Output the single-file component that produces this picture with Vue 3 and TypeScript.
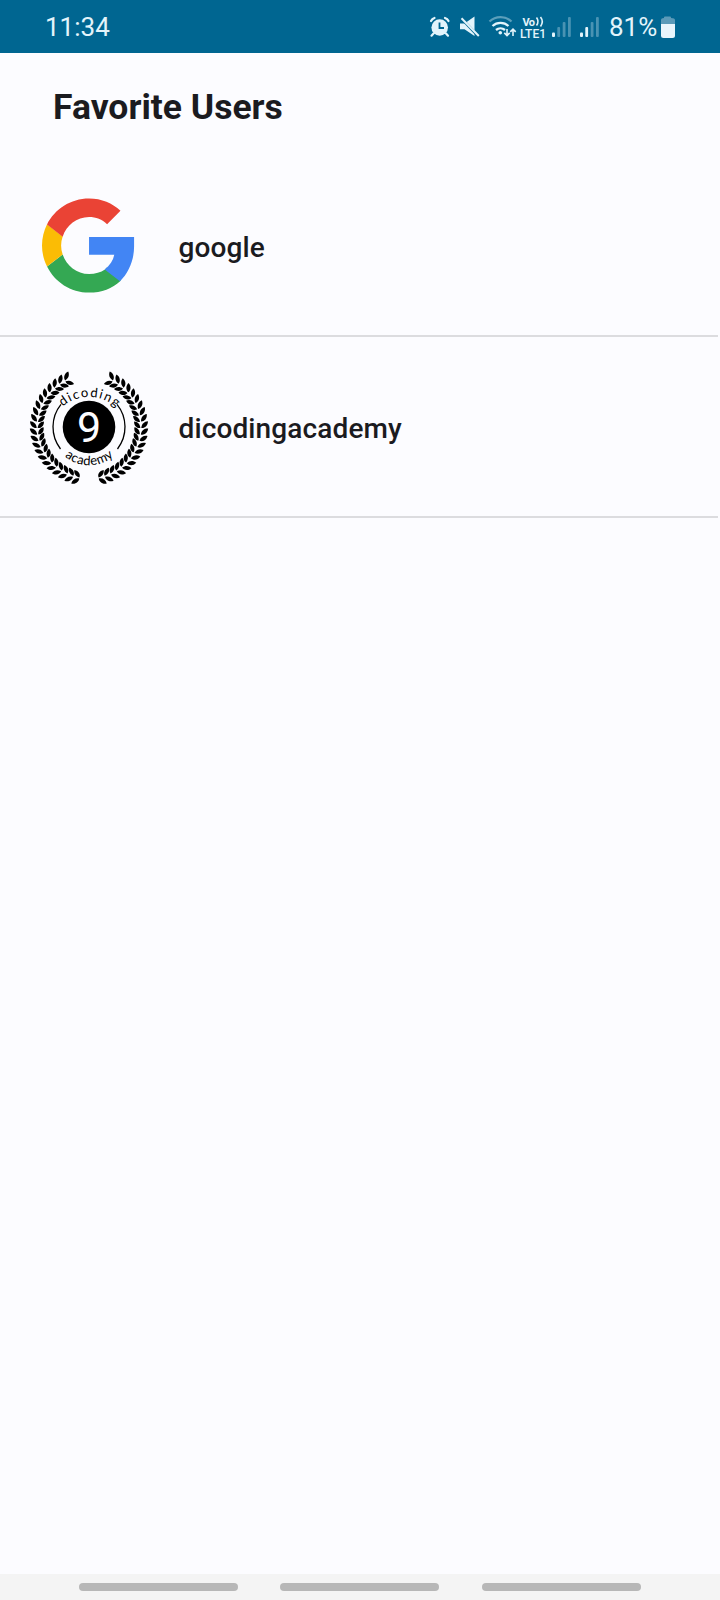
<script setup lang="ts">
interface Leaf {
  transform: string
}

const users = ['google', 'dicodingacademy']

const signals = [
  { id: 1, strength: 1 },
  { id: 2, strength: 2 },
]

function buildLaurel(): Leaf[] {
  const leaves: Leaf[] = []
  const count = 21
  for (let i = 0; i < count; i++) {
    const angle = 103 + (i * (245 - 103)) / (count - 1)
    leaves.push({ transform: `rotate(${angle}) translate(51.8 0)` })
  }
  return leaves
}

const laurel = buildLaurel()
</script>

<template>
  <div class="screen">
    <header class="status">
      <span class="time">11:34</span>
      <svg class="indicators" width="180" height="53" viewBox="424 0 180 53">
        <g fill="#e3f4fb">
          <circle cx="439.700" cy="27.500" r="8.300" />
          <path d="M431 21a6 6 0 0 1 3.500-3M448.500 21a6 6 0 0 0-3.500-3M433.500 33.500l-2 2.200M446 33.500l2 2.200" fill="none" stroke="#e3f4fb" stroke-width="2.200" stroke-linecap="round" />
          <path d="M439.500 22.500v5.500h4.500" fill="none" stroke="#006691" stroke-width="1.800" />
          <path d="M460 23.500h4.500l10-7v19.500l-10-6.800H460z" />
          <path d="M459.500 16.500l19.500 20.500" stroke="#006691" stroke-width="2.600" />
          <path d="M461.500 18.300l17.300 17.700" stroke="#e3f4fb" stroke-width="2" />
        </g>
        <g fill="none" stroke="#e3f4fb" stroke-width="2.300">
          <path d="M489.500 21.500a16 16 0 0 1 22 0" opacity=".4" />
          <path d="M492.500 26a12 12 0 0 1 16 0" />
          <path d="M496 30a7 7 0 0 1 9 0" />
        </g>
        <circle cx="500.300" cy="32.800" r="1.800" fill="#e3f4fb" />
        <path d="M507 29v6.500m-2.700-2.600l2.700 2.700 2.700-2.700M513 36v-6.700m-2.700 2.600l2.700-2.700 2.700 2.700" fill="none" stroke="#e3f4fb" stroke-width="1.600" />
        <text x="522.500" y="25.500" class="net" textLength="12.500">Vo</text>
        <path d="M536.500 17.500q3 4 0 8M540.500 17q3.500 4.500 0 9.500" fill="none" stroke="#e3f4fb" stroke-width="1.600" />
        <text x="520" y="37.500" class="net lte" textLength="26">LTE1</text>
        <g v-for="s in signals" :key="s.id" fill="#e3f4fb" :transform="`translate(${552 + (s.id - 1) * 28} 0)`">
          <rect x="0" y="32.500" width="3" height="4.500" rx="1" />
          <rect x="5.300" y="27" width="2.800" height="10" rx="1" :opacity="s.strength > 1 ? 1 : 0.32" />
          <rect x="10.700" y="22" width="2.800" height="15" rx="1" opacity=".32" />
          <rect x="16" y="17" width="2.800" height="20" rx="1" opacity=".32" />
        </g>
      </svg>
      <span class="percent">81%</span>
      <svg class="battery" width="16" height="24" viewBox="0 0 16 24">
        <path d="M1 9V5q0-2 3-2v-.5q0-1 1-1h5q1 0 1 1V3q4 0 4 2v4z" fill="#5b9ab8" />
        <path d="M1 9h14v11.500q0 2.500-2.500 2.500h-9Q1 23 1 20.500z" fill="#e9f5fb" />
      </svg>
    </header>

    <main class="content">
      <h1>Favorite Users</h1>
      <ul>
        <li v-for="user in users" :key="user">
          <svg v-if="user === 'google'" class="avatar" viewBox="0 0 120 120">
            <g transform="translate(13 12.500) scale(3.920)">
              <path fill="#34a853" d="M5.270 14.270L1.290 17.330C3.260 21.300 7.310 24 12 24c3.240 0 5.950-1.080 7.930-2.910l.3-.5-3.700-3-.47.500c-1.080.72-2.450 1.160-4.060 1.160-3.130 0-5.780-2.110-6.730-4.980z" />
              <path fill="#4285f4" d="M12 9.820v4.550h6.440c-.3 1.530-1.130 2.680-2.440 3.750l3.880 3C22.100 19 23.490 15.700 23.490 12.270V9.820z" />
              <path fill="#fbbc05" d="M1.290 6.550C.48 8.260 0 10.070 0 12s.48 3.740 1.290 5.370l3.980-3.070A7 7 0 0 1 5.270 9.720z" />
              <path fill="#ea4335" d="M12 4.750c1.770 0 3.350.61 4.600 1.800l3.420-3.420C17.950 1.190 15.240 0 12 0 7.310 0 3.260 2.700 1.280 6.610l3.990 3.150C6.220 6.860 8.870 4.750 12 4.750z" />
            </g>
          </svg>
          <svg v-else class="avatar" viewBox="0 0 120 120">
            <defs>
              <path id="arc-top" d="M26 48.100A41 41 0 0 1 94 48.100" />
              <path id="arc-bottom" d="M33.500 87.500A38 38 0 0 0 86.500 87.500" />
              <g id="sprig">
                <path d="M.5-2C3.500-2.600 7.300 0 7.200 4.600C3.500 4.400 .8 2.200 .5-2z" />
                <path d="M-.5-2C-3.500-2.600-7 0-6.600 4.600C-3.300 4.400-.8 2.200-.5-2z" />
              </g>
            </defs>
            <g v-for="side in [1, -1]" :key="side" :transform="`translate(60 60) scale(${side} 1)`">
              <use v-for="(leaf, i) in laurel" :key="i" href="#sprig" :transform="leaf.transform" />
              <path d="M-28-22.600A36 36 0 0 0-28.500 22" fill="none" stroke="#000" stroke-width="1.300" />
            </g>
            <circle cx="60" cy="60" r="26.300" />
            <text x="60" y="75" class="nine">9</text>
            <text class="motto"><textPath href="#arc-top" startOffset="11.500" textLength="58">dicoding</textPath></text>
            <text class="motto"><textPath href="#arc-bottom" startOffset="3" textLength="53">academy</textPath></text>
          </svg>
          <span class="name">{{ user }}</span>
        </li>
      </ul>
    </main>

    <nav class="navbar">
      <i v-for="n in 3" :key="n" />
    </nav>
  </div>
</template>

<style>
body {
  margin: 0;
}
</style>

<style scoped>
.screen {
  display: flex;
  flex-direction: column;
  width: 720px;
  height: 1600px;
  background: #fcfcff;
  color: #1b1b1f;
  font-family: Roboto, sans-serif;
}
.status {
  display: flex;
  align-items: center;
  height: 53px;
  flex: none;
  background: #006691;
  color: #e3f4fb;
  font-size: 26px;
}
.time {
  width: 379px;
  padding-left: 45px;
}
.indicators {
  flex: none;
}
.percent {
  width: 51px;
  padding-left: 5px;
  white-space: nowrap;
}
.battery {
  flex: none;
}
.net {
  font: 700 11px Roboto, sans-serif;
  fill: #e3f4fb;
}
.lte {
  font-size: 12px;
  font-weight: 500;
}
.content {
  flex: 1;
}
h1 {
  margin: 0;
  padding: 33px 0 0 53px;
  font-size: 35.5px;
  line-height: 42px;
  font-weight: 700;
}
ul {
  margin: 28px 0 0;
  padding: 0;
  list-style: none;
}
li {
  display: flex;
  align-items: center;
  width: 718px;
  height: 181px;
  box-sizing: border-box;
  padding-left: 29px;
  border-bottom: 2px solid #dcdcdf;
}
.avatar {
  width: 120px;
  height: 120px;
  flex: none;
}
.name {
  margin-left: 29.5px;
  padding-top: 4px;
  font-size: 28px;
  font-weight: 500;
  letter-spacing: 0.13px;
}
.nine {
  font: 400 43px Roboto, sans-serif;
  fill: #fcfcff;
  text-anchor: middle;
}
.motto {
  font: 400 13px Lato, sans-serif;
  fill: #000;
}
.navbar {
  display: flex;
  gap: 42.5px;
  height: 26px;
  box-sizing: border-box;
  padding: 9px 0 0 78.7px;
  background: #f4f4f4;
}
.navbar i {
  width: 159px;
  height: 8px;
  border-radius: 4px;
  background: #b7b7b7;
}
</style>
